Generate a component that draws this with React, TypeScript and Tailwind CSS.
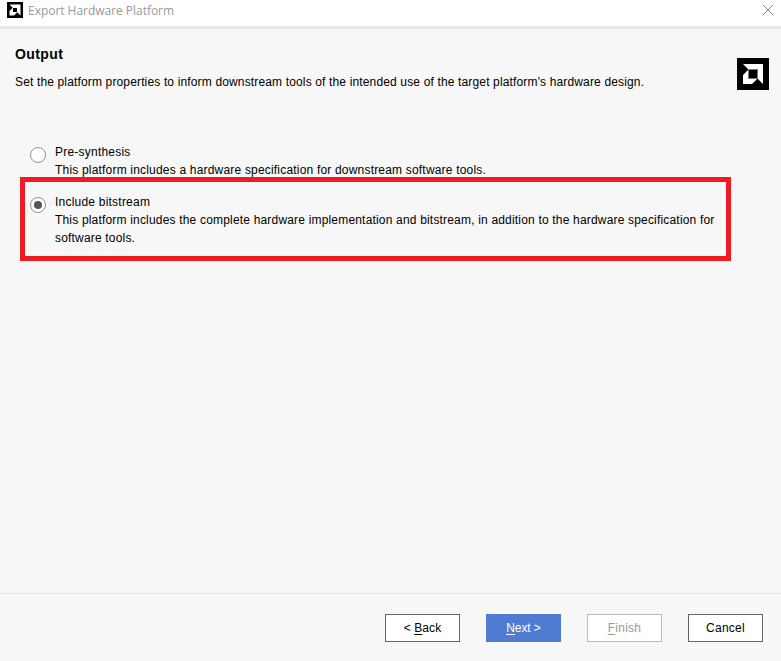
import type { ReactNode } from "react";

function Logo({ className }: { className: string }) {
  return (
    <svg viewBox="0 0 32 32" className={className} aria-hidden="true">
      <rect width="32" height="32" fill="#000" />
      <path d="M6 6H26V26L20 20V12H12Z" fill="#fff" />
      <path d="M12 11L6 17V26H15L21 20H12Z" fill="#fff" />
      <rect x="11.5" y="11.5" width="9" height="9" fill="#000" stroke="#777" />
    </svg>
  );
}

function SmallLogo() {
  return (
    <svg viewBox="0 0 16 16" className="h-4 w-4" aria-hidden="true">
      <rect width="16" height="16" fill="#000" />
      <path d="M2.5 2.5H13.5V13.5L10 10V6H6Z" fill="#fff" />
      <path d="M6 5.5L2.5 9V13.5H7L10.5 10H6Z" fill="#fff" />
    </svg>
  );
}

function Radio({ checked = false }: { checked?: boolean }) {
  return (
    <span className="mt-1 flex h-4 w-4 shrink-0 items-center justify-center rounded-full border border-[#929292] bg-white">
      {checked && <span className="h-2 w-2 rounded-full bg-[#555]" />}
    </span>
  );
}

function Button({ className, children }: { className: string; children: ReactNode }) {
  return (
    <button className={`flex h-7 w-[75px] items-center justify-center whitespace-pre border pb-px text-[12px] ${className}`}>
      {children}
    </button>
  );
}

function Key({ children }: { children: string }) {
  return <span className="underline underline-offset-2">{children}</span>;
}

export default function App() {
  return (
    <div className="flex h-[661px] w-[781px] flex-col overflow-hidden bg-[#f7f7f7] font-['Liberation_Sans',Arial,sans-serif] text-[12px] leading-[18px] text-black">
      <header className="flex h-[29px] shrink-0 items-start border-b-[3px] border-[#e6e6e6] bg-white pl-[7px] pr-[8px] pt-[2px]">
        <SmallLogo />
        <span className="ml-[5px] font-['Open_Sans','Noto_Sans',sans-serif] text-[12px] tracking-[-0.03px] text-[#999]">
          Export Hardware Platform
        </span>
        <svg viewBox="0 0 10 10" className="ml-auto mt-[3px] h-[10px] w-[10px]" stroke="#888" aria-hidden="true">
          <path d="M0 0L10 10M10 0L0 10" />
        </svg>
      </header>

      <section className="flex h-[114px] shrink-0 items-start justify-between pl-[15px] pr-3">
        <div className="pt-4">
          <h1 className="text-[14px] font-bold leading-[18px] tracking-[0.4px]">Output</h1>
          <p className="mt-[10px] whitespace-nowrap tracking-[0.148px]">
            Set the platform properties to inform downstream tools of the intended use of the target platform's hardware design.
          </p>
        </div>
        <Logo className="mt-[29px] h-8 w-8" />
      </section>

      <main className="grow tracking-[0.182px]">
        <label className="flex h-[34px] gap-[9px] pl-[30px]">
          <Radio />
          <span className="whitespace-nowrap">
            <span className="block tracking-[0.22px]">Pre-synthesis</span>
            <span className="block tracking-[0.19px]">
              This platform includes a hardware specification for downstream software tools.
            </span>
          </span>
        </label>
        <div className="ml-5 h-[84px] w-[711px] border-[5px] border-[#ed1c24] pl-[5px] pt-[11px]">
          <label className="flex gap-[9px]">
            <Radio checked />
            <span className="whitespace-nowrap">
              <span className="block tracking-[0.22px]">Include bitstream</span>
              <span className="block">
                This platform includes the complete hardware implementation and bitstream, in addition to the hardware specification for
              </span>
              <span className="block">software tools.</span>
            </span>
          </label>
        </div>
      </main>

      <footer className="flex h-[68px] shrink-0 items-start justify-end gap-[26px] border-t border-[#e4e4e4] pr-[18px] pt-5">
        <Button className="border-[#666] bg-white tracking-[0.1px]">
          {"< "}<Key>B</Key>ack
        </Button>
        <Button className="border-[#4f7bd0] bg-[#4f7bd0] tracking-[-0.1px] text-white">
          <Key>N</Key>{"ext >"}
        </Button>
        <Button className="border-[#bbb] bg-white tracking-[0.25px] text-[#999]">
          <Key>F</Key>inish
        </Button>
        <Button className="border-[#666] bg-white tracking-[0.25px]">Cancel</Button>
      </footer>
    </div>
  );
}
